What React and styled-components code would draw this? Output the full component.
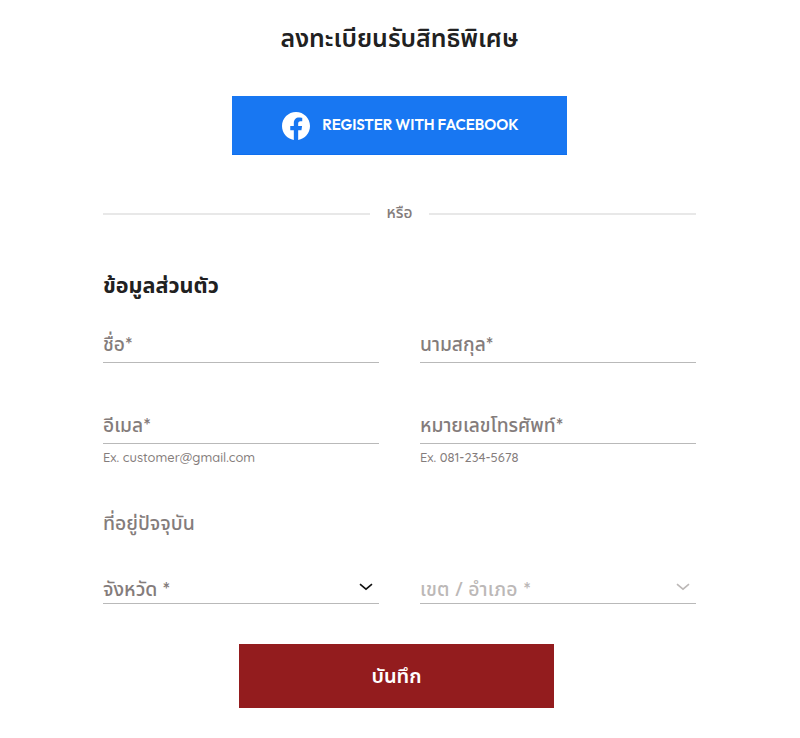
import React from 'react';
import styled, { createGlobalStyle } from 'styled-components';

const thai = "'Noto Sans Thai', 'Noto Sans', sans-serif";
const latin = "'Outfit', 'Lato', sans-serif";

const GlobalStyle = createGlobalStyle`
  * {
    box-sizing: border-box;
  }

  body {
    margin: 0;
    background: #fff;
    font-family: ${thai};
    color: #212121;
  }
`;

const Page = styled.main`
  width: 800px;
  height: 738px;
  padding: 0 104px 0 103px;
  display: flex;
  flex-direction: column;
`;

const Title = styled.h1`
  margin: 21px 0 0;
  height: 38px;
  line-height: 38px;
  font-size: 24.9px;
  font-weight: 600;
  text-align: center;
`;

const FacebookButton = styled.button`
  align-self: center;
  width: 335px;
  height: 59px;
  margin-top: 37px;
  padding: 0 0 0 2px;
  border: 1px solid #0f6fee;
  border-width: 0 0 1px;
  background: #1877f2;
  color: #fff;
  display: flex;
  align-items: center;
  justify-content: center;
  gap: 12px;
  font-family: ${latin};
  font-size: 15px;
  font-weight: 600;
  line-height: 20px;
`;

const FacebookLogo = styled.svg`
  width: 28px;
  height: 28px;
  margin-top: 2px;
`;

const Divider = styled.div`
  display: flex;
  align-items: center;
  justify-content: space-between;
  height: 24px;
  margin-top: 47px;
  font-size: 15.5px;
  line-height: 24px;
  font-weight: 550;
  color: #847c7b;
`;

const Rule = styled.span`
  width: 267px;
  height: 2px;
  background: #e8e8e8;
`;

const SectionTitle = styled.h2`
  margin: 43px 0 0;
  height: 36px;
  line-height: 36px;
  font-size: 21.6px;
  font-weight: 660;
`;

const Grid = styled.div`
  display: grid;
  grid-template-columns: 276px 276px;
  column-gap: 41px;
  margin-top: ${props => props.$top}px;
`;

const FieldBox = styled.div`
  height: ${props => props.$height}px;
  border-bottom: 1px solid #b9b9b9;
  display: flex;
  justify-content: space-between;
  align-items: center;
  padding: ${props => (props.$select ? '4px 6px 0 0' : '0')};
  color: ${props => (props.$disabled ? '#bcb8b7' : '#847c7b')};
`;

const Label = styled.label`
  font-size: ${props => props.$size || 19.2}px;
  line-height: 30px;
  font-weight: 550;
  letter-spacing: ${props => props.$spacing || 0}px;
  white-space: pre;
`;

const Star = styled.span`
  font-family: 'Lato', sans-serif;
  font-size: 18px;
  font-weight: 700;
`;

const Hint = styled.div`
  height: 26px;
  line-height: 26px;
  font-family: 'Quicksand', 'Lato', sans-serif;
  font-size: 12.9px;
  font-weight: 500;
  color: #847c7b;
`;

const AddressTitle = styled.h3`
  margin: 39px 0 0;
  height: 30px;
  line-height: 30px;
  font-size: 19.4px;
  font-weight: 550;
  color: #847c7b;
`;

const Chevron = styled.svg`
  width: 14px;
  height: 8px;
  margin-top: -4px;
  fill: none;
  stroke: ${props => (props.$disabled ? '#bcb8b7' : '#111')};
  stroke-width: 1.6;
`;

const SubmitButton = styled.button`
  width: 315px;
  height: 64px;
  margin: 40px 0 0 136px;
  padding: 2px 0 0;
  border: 0;
  background: #931c1e;
  color: #fff;
  font-family: ${thai};
  font-size: 20px;
  font-weight: 580;
`;

const Field = ({ label, hint }) => (
    <div>
        <FieldBox $height={36}>
            <Label>{label}<Star>*</Star></Label>
        </FieldBox>
        {hint && <Hint>{hint}</Hint>}
    </div>
);

const Select = ({ label, spacing, disabled }) => (
    <FieldBox $height={33} $select $disabled={disabled}>
        <Label $size={19.4} $spacing={spacing}>{label} <Star>*</Star></Label>
        <Chevron viewBox="0 0 14 8" $disabled={disabled}>
            <path d="M1 1.2 L7 6.2 L13 1.2" />
        </Chevron>
    </FieldBox>
);

const App = () => (
    <>
        <GlobalStyle />
        <Page>
            <Title>ลงทะเบียนรับสิทธิพิเศษ</Title>
            <FacebookButton type="button">
                <FacebookLogo viewBox="0 0 24 24" fill="#fff">
                    <path d="M24 12.07C24 5.4 18.63 0 12 0S0 5.4 0 12.07C0 18.1 4.39 23.1 10.13 24v-8.44H7.08v-3.49h3.05V9.41c0-3.02 1.79-4.69 4.53-4.69 1.31 0 2.69.24 2.69.24v2.97h-1.52c-1.49 0-1.96.93-1.96 1.89v2.25h3.33l-.53 3.49h-2.8V24C19.61 23.1 24 18.1 24 12.07z" />
                </FacebookLogo>
                <span>REGISTER WITH FACEBOOK</span>
            </FacebookButton>
            <Divider>
                <Rule />
                หรือ
                <Rule />
            </Divider>

            <SectionTitle>ข้อมูลส่วนตัว</SectionTitle>
            <Grid $top={22}>
                <Field label="ชื่อ" />
                <Field label="นามสกุล" />
            </Grid>
            <Grid $top={45}>
                <Field label="อีเมล" hint="Ex. customer@gmail.com" />
                <Field label="หมายเลขโทรศัพท์" hint="Ex. 081-234-5678" />
            </Grid>

            <AddressTitle>ที่อยู่ปัจจุบัน</AddressTitle>
            <Grid $top={32}>
                <Select label="จังหวัด" />
                <Select label="เขต / อำเภอ" spacing={0.3} disabled />
            </Grid>
            <SubmitButton type="button">บันทึก</SubmitButton>
        </Page>
    </>
);

export default App;
